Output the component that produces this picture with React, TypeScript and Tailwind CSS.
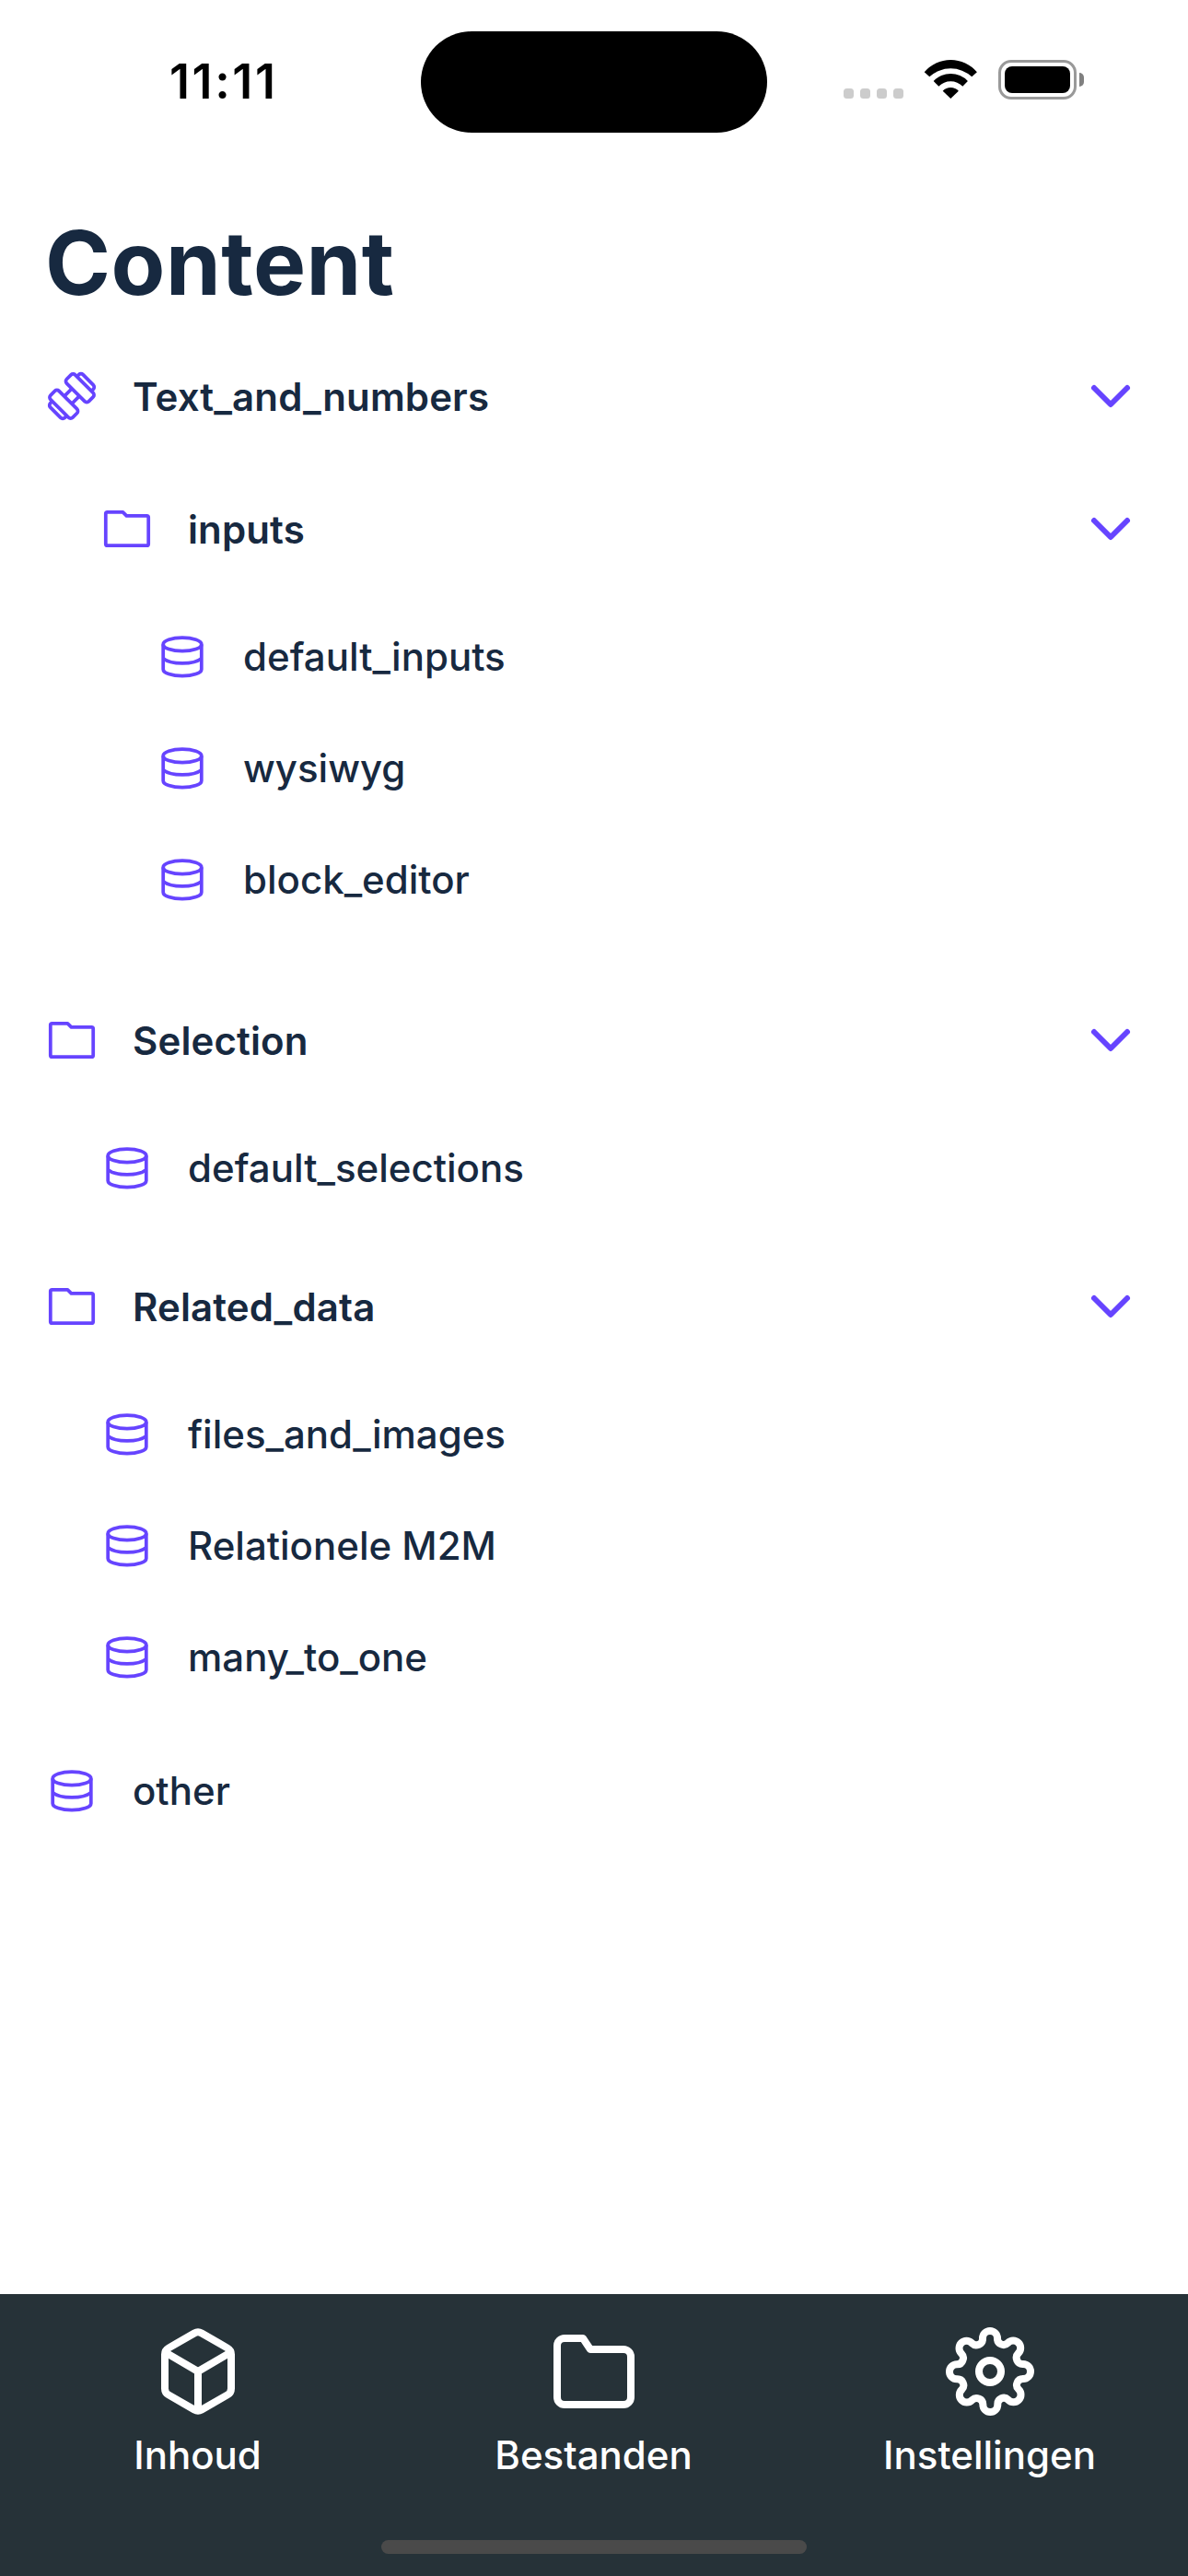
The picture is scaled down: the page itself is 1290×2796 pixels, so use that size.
import type { ReactNode } from "react";
import { FiChevronDown, FiFolder, FiSettings } from "react-icons/fi";

function BarbellIcon() {
  return (
    <svg className="size-[60px] shrink-0" viewBox="0 0 60 60" fill="none" stroke="#6644ff" strokeWidth="3.75" strokeLinejoin="round">
      <g transform="translate(30 30) rotate(-45)">
        <rect x="5.9" y="-17" width="13" height="34" rx="3.2" />
        <rect x="-18.9" y="-17" width="13" height="34" rx="3.2" />
        <path d="M-5.9 -5.8H5.9M-5.9 5.8H5.9" />
        <path d="M18.9 -11.1H21.9A3.2 3.2 0 0 1 25.1 -7.9V7.9A3.2 3.2 0 0 1 21.9 11.1H18.9" />
        <path d="M-18.9 -11.1H-21.9A3.2 3.2 0 0 0 -25.1 -7.9V7.9A3.2 3.2 0 0 0 -21.9 11.1H-18.9" />
      </g>
    </svg>
  );
}

function FolderIcon() {
  return (
    <svg className="size-[60px] shrink-0" viewBox="0 0 60 60" fill="none" stroke="#6644ff" strokeWidth="3.75" strokeLinejoin="round">
      <path d="M8.6 11.8H25.4L29.4 15.8H51.4A1.8 1.8 0 0 1 53.2 17.6V46.4A1.8 1.8 0 0 1 51.4 48.2H8.6A1.8 1.8 0 0 1 6.8 46.4V13.6A1.8 1.8 0 0 1 8.6 11.8Z" />
    </svg>
  );
}

function DatabaseIcon() {
  return (
    <svg className="size-[60px] shrink-0" viewBox="0 0 60 60" fill="none" stroke="#6644ff" strokeWidth="3.75">
      <ellipse cx="30" cy="16.4" rx="20.8" ry="7.3" />
      <path d="M9.2 16.4V43.4C9.2 47.4 18.5 50.7 30 50.7S50.8 47.4 50.8 43.4V16.4" />
      <path d="M9.2 31.6C13 34.8 21 36.9 30 36.9S47 34.8 50.8 31.6" />
    </svg>
  );
}

function BoxIcon() {
  return (
    <svg className="size-24" viewBox="0 0 24 24" fill="none" stroke="currentColor" strokeWidth="2" strokeLinejoin="round">
      <path d="M21 16.6V7.4a2 2 0 0 0-1-1.75L13 1.62a2 2 0 0 0-2 0L4 5.65A2 2 0 0 0 3 7.4v9.2a2 2 0 0 0 1 1.75l7 4.03a2 2 0 0 0 2 0l7-4.03a2 2 0 0 0 1-1.75z" />
      <path d="M3.3 6.9L12 12l8.7-5.1M12 22.4V12" />
    </svg>
  );
}

function WifiIcon() {
  return (
    <svg className="h-[43px] w-[59px]" viewBox="0 0 59 43" fill="#000">
      <path d="M.7 13.3A37.4 37.4 0 0 1 57.9 13.3L52.3 18.3A33.9 33.9 0 0 0 6.3 18.3Z" />
      <path d="M10.7 23A25.6 25.6 0 0 1 47.9 23L42.3 28.7A18.3 18.3 0 0 0 16.3 28.7Z" />
      <path d="M20.7 33.7A12 12 0 0 1 37.9 33.7L29.3 42Z" />
    </svg>
  );
}

function StatusBar() {
  return (
    <header className="flex h-[177px] items-start">
      <div className="w-[457px] pt-[57px] pl-[184px] text-[52px] leading-[63px] font-semibold tracking-[2.6px] text-black">
        11:11
      </div>
      <div className="mt-[34px] h-[110px] w-[376px] rounded-full bg-black" />
      <div className="flex flex-1 pt-[65px] pl-[83px]">
        <div className="flex gap-[7px] pt-[31px]">
          {[0, 1, 2, 3].map((i) => (
            <span key={i} className="size-[11px] rounded-[3.5px] bg-[#cccccc]" />
          ))}
        </div>
        <div className="ml-[22px]">
          <WifiIcon />
        </div>
        <div className="ml-[22px] h-[43px] w-[85px] rounded-[14px] border-[3px] border-[#999999] p-1">
          <div className="h-full rounded-[8px] bg-black" />
        </div>
        <div className="mt-[14px] ml-[3px] h-[15px] w-[5px] rounded-r-full bg-[#808080]" />
      </div>
    </header>
  );
}

function FolderRow({ icon, label }: { icon: ReactNode; label: string }) {
  return (
    <div className="flex h-36 items-center gap-9">
      {icon}
      <span className="flex-1 pt-0.5 text-[42px] leading-[60px] font-semibold tracking-[0.12px]">{label}</span>
      <FiChevronDown className="size-[72px] text-[#6644ff]" />
    </div>
  );
}

function ItemRow({ label }: { label: string }) {
  return (
    <div className="flex h-[120px] items-center gap-9">
      <DatabaseIcon />
      <span className="text-[42px] leading-[60px] font-medium">{label}</span>
    </div>
  );
}

function Items({ labels }: { labels: string[] }) {
  return (
    <div className="flex flex-col gap-px pt-[7px] pl-[60px]">
      {labels.map((l) => (
        <ItemRow key={l} label={l} />
      ))}
    </div>
  );
}

function Tab({ icon, label }: { icon: ReactNode; label: string }) {
  return (
    <div className="flex flex-1 flex-col items-center gap-[13px] pt-9">
      {icon}
      <span className="pr-px text-[42px] leading-[60px] font-medium">{label}</span>
    </div>
  );
}

export default function App() {
  return (
    <div className="flex h-[2796px] w-[1290px] flex-col bg-white font-['Inter',sans-serif] text-[#172940]">
      <StatusBar />
      <main className="flex-1 px-12">
        <h1 className="pt-12 pl-px text-[96px] leading-[120px] font-bold tracking-[0.5px]">Content</h1>
        <div className="pt-[13px]">
          <div className="pb-[18px]">
            <FolderRow icon={<BarbellIcon />} label="Text_and_numbers" />
            <div className="pb-6 pl-[60px]">
              <FolderRow icon={<FolderIcon />} label="inputs" />
              <Items labels={["default_inputs", "wysiwyg", "block_editor"]} />
            </div>
          </div>
          <div className="pb-[18px]">
            <FolderRow icon={<FolderIcon />} label="Selection" />
            <Items labels={["default_selections"]} />
          </div>
          <div className="pb-[25px]">
            <FolderRow icon={<FolderIcon />} label="Related_data" />
            <Items labels={["files_and_images", "Relationele M2M", "many_to_one"]} />
          </div>
          <ItemRow label="other" />
        </div>
      </main>
      <nav className="flex h-[306px] flex-col bg-[#263238] text-white">
        <div className="flex h-[267px]">
          <Tab icon={<BoxIcon />} label="Inhoud" />
          <Tab icon={<FiFolder className="size-24" />} label="Bestanden" />
          <Tab icon={<FiSettings className="size-24" />} label="Instellingen" />
        </div>
        <div className="h-[15px] w-[462px] self-center rounded-full bg-[#4a4a4a]" />
      </nav>
    </div>
  );
}
